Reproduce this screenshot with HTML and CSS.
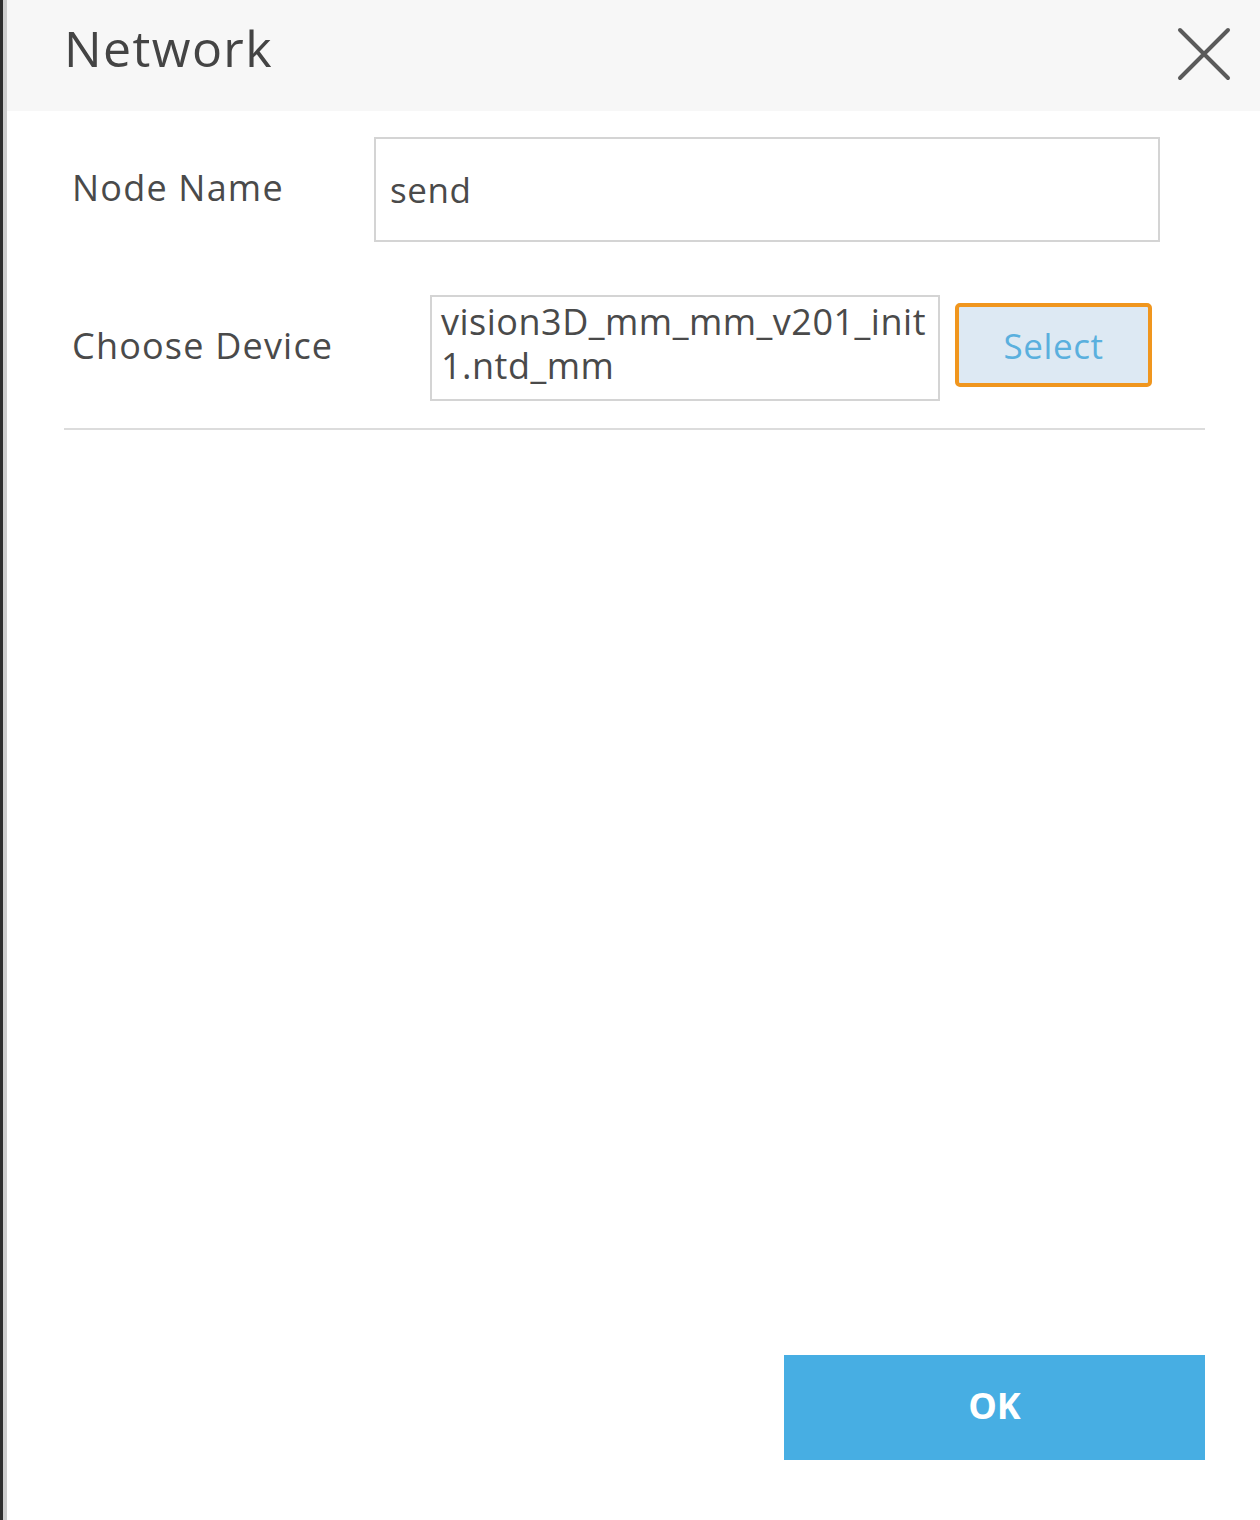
FILE: index.html
```html
<!DOCTYPE html>
<html>
<head>
<meta charset="utf-8">
<link rel="stylesheet" href="styles.css">
</head>
<body>
<div class="frame">
<div class="dialog">
  <div class="header">
    <div class="title">Network</div>
    <div class="close">
      <svg width="56" height="56" viewBox="0 0 56 56"><path d="M4 4 L52 52 M52 4 L4 52" stroke="#5a5a5a" stroke-width="4" stroke-linecap="round" fill="none"/></svg>
    </div>
  </div>
  <div class="body">
    <div class="row row-name">
      <div class="label">Node Name</div>
      <div class="input input-name">send</div>
    </div>
    <div class="row row-device">
      <div class="label">Choose Device</div>
      <div class="input input-device">vision3D_mm_mm_v201_init<br>1.ntd_mm</div>
      <div class="select">Select</div>
    </div>
    <div class="sep"></div>
    <div class="spacer"></div>
    <div class="footer">
      <div class="ok">OK</div>
    </div>
  </div>
</div>
</div>
</body>
</html>
```

FILE: styles.css
```css
html, body {
  margin: 0;
  padding: 0;
  background: #fff;
}
body {
  font-family: "Open Sans", "Noto Sans", sans-serif;
  color: #444;
}
.frame {
  height: 1520px;
  border-left: 3px solid #2e2e2e;
  box-sizing: border-box;
}
.dialog {
  height: 100%;
  border-left: 4px solid #cdcdcd;
  display: flex;
  flex-direction: column;
  box-sizing: border-box;
}
.header {
  height: 111px;
  background: #f7f7f7;
  display: flex;
  align-items: flex-start;
  justify-content: space-between;
  padding-left: 57px;
  padding-right: 28px;
}
.title {
  font-size: 50px;
  letter-spacing: 1.4px;
  color: #444;
  margin-top: 14px;
}
.close {
  margin-top: 26px;
}
.close svg { display: block; }
.body {
  flex: 1;
  display: flex;
  flex-direction: column;
  padding: 0 55px 0 57px;
}
.row {
  display: flex;
  align-items: center;
}
.label {
  font-size: 36px;
  letter-spacing: 1.2px;
  color: #4a4a4a;
  padding-left: 8px;
  padding-bottom: 5px;
  box-sizing: border-box;
  flex-shrink: 0;
}
.row-name {
  margin-top: 26px;
}
.row-name .label {
  width: 310px;
}
.input {
  border: 2px solid #d4d4d4;
  background: #fff;
  box-sizing: border-box;
  color: #4a4a4a;
}
.input-name {
  width: 786px;
  height: 105px;
  font-size: 35px;
  letter-spacing: 0.6px;
  padding-left: 14px;
  display: flex;
  align-items: center;
}
.row-device {
  margin-top: 53px;
}
.row-device .label {
  width: 366px;
}
.input-device {
  width: 510px;
  height: 106px;
  font-size: 36px;
  letter-spacing: 0.5px;
  line-height: 44px;
  padding: 3px 0 0 9px;
  white-space: nowrap;
  overflow: hidden;
}
.select {
  margin-left: 15px;
  width: 197px;
  height: 84px;
  box-sizing: border-box;
  border: 4px solid #f0961e;
  border-radius: 5px;
  background: #dde9f3;
  color: #5ab0de;
  font-size: 35px;
  letter-spacing: 0.6px;
  display: flex;
  align-items: center;
  justify-content: center;
  margin-top: -6px;
}
.sep {
  margin-top: 27px;
  height: 2px;
  background: #dcdcdc;
}
.spacer {
  flex: 1;
}
.footer {
  display: flex;
  justify-content: flex-end;
  padding-bottom: 60px;
}
.ok {
  width: 421px;
  height: 105px;
  background: #47aee3;
  color: #fff;
  font-weight: 700;
  font-size: 36px;
  display: flex;
  align-items: center;
  justify-content: center;
  padding-bottom: 4px;
  box-sizing: border-box;
}
```
